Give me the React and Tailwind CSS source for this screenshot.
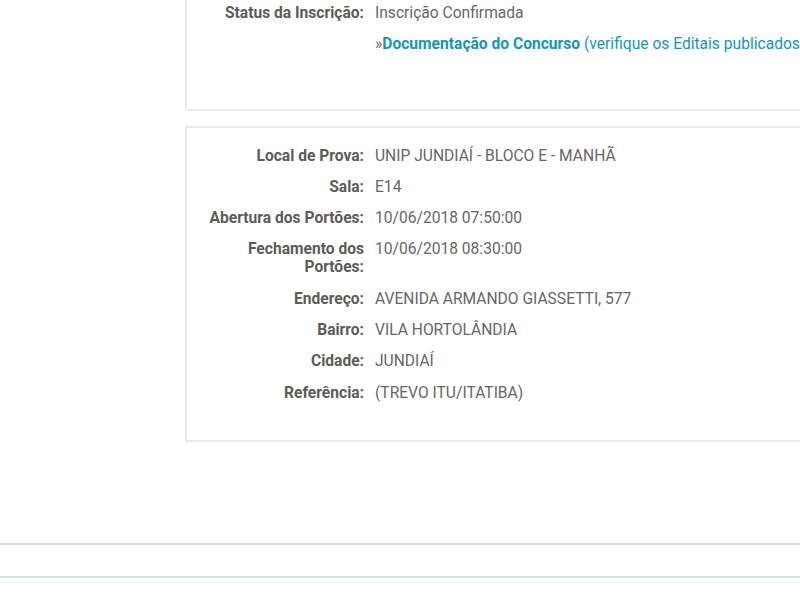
import React from 'react';

const local = [
  ['Local de Prova:', 'UNIP JUNDIAÍ - BLOCO E - MANHÃ'],
  ['Sala:', 'E14'],
  ['Abertura dos Portões:', '10/06/2018 07:50:00'],
  ['Fechamento dos Portões:', '10/06/2018 08:30:00'],
  ['Endereço:', 'AVENIDA ARMANDO GIASSETTI, 577'],
  ['Bairro:', 'VILA HORTOLÂNDIA'],
  ['Cidade:', 'JUNDIAÍ'],
  ['Referência:', '(TREVO ITU/ITATIBA)'],
];

function Row({ label, children }) {
  return (
    <div className="flex gap-[11px] mb-[13.3px] leading-[18px]">
      <div className="w-[160px] shrink-0 text-right font-bold text-[#5c5c56]">{label}</div>
      <div className="text-[#666666] whitespace-nowrap">{children}</div>
    </div>
  );
}

export default function App() {
  return (
    <div
      className="w-[800px] h-[600px] overflow-hidden bg-white text-[15.6px]"
      style={{ fontFamily: 'Roboto, "Liberation Sans", sans-serif' }}
    >
      {/* inscrição panel (top cut off) */}
      <div className="ml-[185px] w-[700px] border-2 border-t-0 border-[#ebebeb] pt-[4px] pb-[42px] pl-[17px]">
        <Row label="Status da Inscrição:">Inscrição Confirmada</Row>
        <Row label="">
          <span className="text-[#666666]">»</span>
          <span className="font-bold text-[#1596b2]">Documentação do Concurso</span>
          <span className="text-[#1596b2]"> (verifique os Editais publicados)</span>
        </Row>
      </div>

      {/* local de prova panel */}
      <div className="ml-[185px] mt-[15px] w-[700px] border-2 border-[#ebebeb] pt-[19px] pb-[25px] pl-[17px]">
        {local.map(([l, v]) => (
          <Row key={l} label={l}>{v}</Row>
        ))}
      </div>

      <div className="mt-[101px] h-[2px] bg-[#cfe3da]" />
      <div className="mt-[31px] h-[2px] bg-[#cde2ea]" />
    </div>
  );
}
